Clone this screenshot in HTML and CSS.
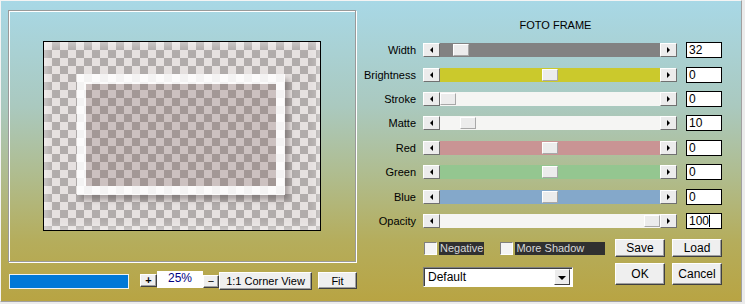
FILE: index.html
```html
<!DOCTYPE html>
<html lang="en">
<head>
    <meta charset="UTF-8">
    <title>Foto Frame</title>
    <link rel="stylesheet" href="styles.css">
</head>
<body>
    <div class="dlg">
        <div class="left">
            <div class="pbox">
                <div class="pv">
                    <div class="pv-tint">
                        <div class="fr">
                            <div class="fr-in"></div>
                        </div>
                    </div>
                </div>
            </div>
            <div class="bar">
                <div class="prog"></div>
                <button class="btn sq plus">+</button>
                <div class="zoom">25%</div>
                <button class="btn sq minus">&minus;</button>
                <button class="btn corner">1:1 Corner View</button>
                <button class="btn fit">Fit</button>
            </div>
        </div>

        <div class="right">
            <div class="title">FOTO FRAME</div>
            <div class="rows">
                <div class="row">
                    <span class="lbl">Width</span>
                    <div class="sl">
                        <span class="arr"><i class="tri-l"></i></span>
                        <div class="trk gray"><span class="th" style="left: 13px"></span></div>
                        <span class="arr"><i class="tri-r"></i></span>
                    </div>
                    <div class="val">32</div>
                </div>
                <div class="row">
                    <span class="lbl">Brightness</span>
                    <div class="sl">
                        <span class="arr"><i class="tri-l"></i></span>
                        <div class="trk yellow"><span class="th" style="left: 102px"></span></div>
                        <span class="arr"><i class="tri-r"></i></span>
                    </div>
                    <div class="val">0</div>
                </div>
                <div class="row">
                    <span class="lbl">Stroke</span>
                    <div class="sl">
                        <span class="arr"><i class="tri-l"></i></span>
                        <div class="trk light"><span class="th" style="left: 0px"></span></div>
                        <span class="arr"><i class="tri-r"></i></span>
                    </div>
                    <div class="val">0</div>
                </div>
                <div class="row">
                    <span class="lbl">Matte</span>
                    <div class="sl">
                        <span class="arr"><i class="tri-l"></i></span>
                        <div class="trk light"><span class="th" style="left: 20px"></span></div>
                        <span class="arr"><i class="tri-r"></i></span>
                    </div>
                    <div class="val">10</div>
                </div>
                <div class="row">
                    <span class="lbl">Red</span>
                    <div class="sl">
                        <span class="arr"><i class="tri-l"></i></span>
                        <div class="trk red"><span class="th" style="left: 102px"></span></div>
                        <span class="arr"><i class="tri-r"></i></span>
                    </div>
                    <div class="val">0</div>
                </div>
                <div class="row">
                    <span class="lbl">Green</span>
                    <div class="sl">
                        <span class="arr"><i class="tri-l"></i></span>
                        <div class="trk green"><span class="th" style="left: 102px"></span></div>
                        <span class="arr"><i class="tri-r"></i></span>
                    </div>
                    <div class="val">0</div>
                </div>
                <div class="row">
                    <span class="lbl">Blue</span>
                    <div class="sl">
                        <span class="arr"><i class="tri-l"></i></span>
                        <div class="trk blue"><span class="th" style="left: 102px"></span></div>
                        <span class="arr"><i class="tri-r"></i></span>
                    </div>
                    <div class="val">0</div>
                </div>
                <div class="row">
                    <span class="lbl">Opacity</span>
                    <div class="sl">
                        <span class="arr"><i class="tri-l"></i></span>
                        <div class="trk light"><span class="th" style="left: 204px"></span></div>
                        <span class="arr"><i class="tri-r"></i></span>
                    </div>
                    <div class="val">100<span class="caret"></span></div>
                </div>
            </div>

            <div class="bot">
                <div class="opts">
                    <div class="checks">
                        <span class="cb"></span>
                        <span class="cb-lbl">Negative</span>
                        <span class="cb cb2"></span>
                        <span class="cb-lbl wide">More Shadow</span>
                    </div>
                    <div class="sel">
                        <span>Default</span>
                        <span class="sel-btn"><i class="tri-d"></i></span>
                    </div>
                </div>
                <div class="btns">
                    <button class="btn">Save</button>
                    <button class="btn">Load</button>
                    <button class="btn big">OK</button>
                    <button class="btn big">Cancel</button>
                </div>
            </div>
        </div>
    </div>
</body>
</html>
```

FILE: styles.css
```css
body {
    margin: 0;
    background: #ececec;
    font-family: 'Liberation Sans', Arial, sans-serif;
    font-size: 11px;
    color: #000;
}
.dlg {
    width: 742px;
    height: 302px;
    box-sizing: border-box;
    display: flex;
    border: 1px solid;
    border-color: #f4f4f4 #a0a0a0 #a0a0a0 #f4f4f4;
    background: linear-gradient(to bottom, #a8d8e6 0%, #aac9bf 35%, #b0bb8a 60%, #b5ad5c 80%, #b8a443 100%);
}

/* left side: preview */
.left {
    width: 359px;
    padding: 9px 0 0 7px;
    box-sizing: border-box;
}
.pbox {
    width: 348px;
    height: 252px;
    box-sizing: border-box;
    border: 1px solid #9a9a9a;
    box-shadow: inset 1px 1px 0 #fff, 1px 1px 0 #fff;
    display: flex;
    align-items: center;
    justify-content: center;
}
.pv {
    width: 278px;
    height: 190px;
    box-sizing: border-box;
    border: 1px solid #000;
    background-color: #fff;
    background-image:
        linear-gradient(45deg, #bcbcbc 25%, transparent 25%, transparent 75%, #bcbcbc 75%),
        linear-gradient(45deg, #bcbcbc 25%, transparent 25%, transparent 75%, #bcbcbc 75%);
    background-size: 16px 16px;
    background-position: 0 0, 8px 8px;
}
.pv-tint {
    height: 100%;
    box-sizing: border-box;
    padding: 32px 35px 35px 33px;
    background: rgba(140, 118, 115, 0.22);
    box-shadow: inset 0 0 8px 2px rgba(255, 255, 255, 0.5);
}
.fr {
    height: 100%;
    box-sizing: border-box;
    border: 9px solid rgba(255, 255, 255, 0.86);
    border-top-width: 10px;
    box-shadow: 4px 5px 5px rgba(60, 50, 50, 0.35);
}
.fr-in {
    height: 100%;
    background: rgba(115, 82, 78, 0.22);
}

.bar {
    display: flex;
    align-items: center;
    height: 20px;
    margin-top: 8px;
    padding-left: 1px;
}
.prog {
    width: 120px;
    height: 15px;
    box-sizing: border-box;
    margin-top: 2px;
    background: #0078d7;
    border: 1px solid #eef2f2;
}
.btn {
    font-family: 'Liberation Sans', Arial, sans-serif;
    font-size: 11px;
    color: #000;
    padding: 0;
    margin: 0;
    background: #efefef;
    border: 1px solid;
    border-color: #fff #404040 #404040 #fff;
    box-shadow: inset -1px -1px 0 #a0a0a0;
    box-sizing: border-box;
}
.sq {
    width: 17px;
    height: 13px;
    line-height: 10px;
    font-weight: bold;
}
.plus {
    margin-left: 11px;
}
.minus {
    width: 16px;
    height: 13px;
    margin-top: 2px;
    font-weight: normal;
}
.zoom {
    width: 46px;
    height: 17px;
    line-height: 15px;
    background: #fff;
    color: #000080;
    text-align: center;
    font-size: 12px;
    margin-top: -2px;
}
.corner {
    width: 93px;
    height: 18px;
    margin-top: 1px;
}
.fit {
    width: 39px;
    height: 17px;
    margin-left: 6px;
    margin-top: 1px;
}

/* right side: controls */
.right {
    flex: 1;
    padding-top: 18px;
}
.title {
    line-height: 13px;
    text-align: center;
    padding-left: 10px;
}
.rows {
    margin-top: 6px;
}
.row {
    height: 24.43px;
    display: flex;
    align-items: center;
}
.lbl {
    width: 56px;
    margin-right: 7px;
    text-align: right;
}
.sl {
    width: 254px;
    height: 14px;
    display: flex;
}
.arr {
    width: 17px;
    height: 14px;
    box-sizing: border-box;
    background: #ececec;
    border: 1px solid;
    border-color: #fff #707070 #707070 #fff;
    display: flex;
    align-items: center;
    justify-content: center;
}
.tri-l, .tri-r, .tri-d {
    width: 0;
    height: 0;
    border: 3px solid transparent;
}
.tri-l {
    border-right: 3px solid #000;
    border-left-width: 0;
    margin-left: -1px;
}
.tri-r {
    border-left: 3px solid #000;
    border-right-width: 0;
}
.trk {
    flex: 1;
    position: relative;
}
.th {
    position: absolute;
    top: 1px;
    width: 16px;
    height: 12px;
    box-sizing: border-box;
    background: #ececec;
    border: 1px solid;
    border-color: #fff #a8a8a8 #a8a8a8 #fff;
}
.gray { background: #828282; }
.yellow { background: #cbc92c; }
.light { background: #f5f5f3; }
.red { background: #c99494; }
.green { background: #94c690; }
.blue { background: #84a8ca; }

.val {
    width: 36px;
    height: 16px;
    margin-left: 9px;
    box-sizing: border-box;
    border: 1px solid #000;
    background: #fff;
    padding-left: 2px;
    line-height: 14px;
    font-size: 12px;
    display: flex;
    align-items: center;
}
.caret {
    width: 1px;
    height: 12px;
    background: #000;
}

.bot {
    display: flex;
    margin-top: 6px;
    padding-left: 63px;
}
.opts {
    width: 192px;
}
.checks {
    height: 18px;
    display: flex;
    align-items: center;
}
.cb {
    width: 13px;
    height: 13px;
    box-sizing: border-box;
    margin-left: 1px;
    background: #f4f4f4;
    border: 1px solid;
    border-color: #808080 #fff #fff #808080;
}
.cb2 {
    margin-left: 16px;
}
.cb-lbl {
    margin-left: 2px;
    padding: 0 1px;
    line-height: 13px;
    background: #303030;
    color: #d8d8d8;
}
.wide {
    width: 90px;
    box-sizing: border-box;
}
.sel {
    margin-top: 10px;
    width: 150px;
    height: 20px;
    box-sizing: border-box;
    border: 1px solid;
    border-color: #808080 #fff #fff #808080;
    box-shadow: inset 1px 1px 0 #404040;
    background: #fff;
    display: flex;
    align-items: center;
    justify-content: space-between;
    padding-left: 4px;
    font-size: 12px;
}
.sel-btn {
    width: 16px;
    height: 16px;
    margin-right: 2px;
    box-sizing: border-box;
    background: #ececec;
    border: 1px solid;
    border-color: #fff #404040 #404040 #fff;
    display: flex;
    align-items: center;
    justify-content: center;
}
.tri-d {
    border-width: 4px 4px 0 4px;
    border-top-color: #000;
    margin-top: 1px;
}
.btns {
    display: grid;
    grid-template-columns: 50px 50px;
    grid-template-rows: 18px 22px;
    column-gap: 7px;
    row-gap: 6px;
}
.btns .btn {
    font-size: 12px;
}
```
